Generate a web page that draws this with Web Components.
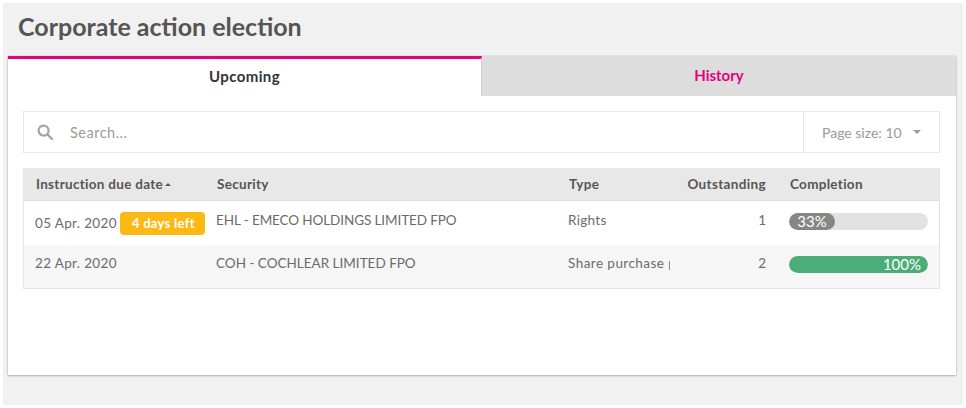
<!DOCTYPE html>
<html>
<head>
<meta charset="utf-8">
<title>Corporate action election</title>
<style>
    html, body { margin: 0; background: #fff; }
    body { padding: 3px; width: 960px; height: 402px; font-family: Lato, "Open Sans", sans-serif; color: #555; }
</style>
</head>
<body>
<election-page heading="Corporate action election">
    <election-tabs active="Upcoming" other="History"></election-tabs>
    <search-bar placeholder="Search..." page-size="10"></search-bar>
    <election-table>
        <table-head></table-head>
        <table-row date="05 Apr. 2020" badge="4 days left" security="EHL - EMECO HOLDINGS LIMITED FPO" type="Rights" outstanding="1" percent="33"></table-row>
        <table-row alt date="22 Apr. 2020" security="COH - COCHLEAR LIMITED FPO" type="Share purchase plan" outstanding="2" percent="100"></table-row>
    </election-table>
</election-page>

<script>
const COLUMNS = '181px 352px 102px 95px 1fr';

class ElectionPage extends HTMLElement {
    constructor() {
        super();
        this.attachShadow({ mode: 'open' });
        this.shadowRoot.innerHTML = `
            <style>
                :host { display: block; height: 402px; background: #f1f1f1; box-sizing: border-box; padding: 0 7px 0 5px; }
                h1 { margin: 0; height: 53px; padding: 8px 0 0 10px; box-sizing: border-box; font-size: 25px; line-height: 30px; font-weight: 700; color: #555; }
                .card { height: 319px; box-sizing: border-box; background: #fff; box-shadow: 0 1px 2px rgba(0,0,0,.25), 0 0 2px rgba(0,0,0,.12); }
                .body { padding: 15px 16px 0 15px; }
            </style>
            <h1></h1>
            <div class="card">
                <slot name="tabs"></slot>
                <div class="body"><slot></slot></div>
            </div>
        `;
        this.shadowRoot.querySelector('h1').textContent = this.getAttribute('heading');
        this.querySelector('election-tabs').slot = 'tabs';
    }
}

class ElectionTabs extends HTMLElement {
    constructor() {
        super();
        this.attachShadow({ mode: 'open' });
        this.shadowRoot.innerHTML = `
            <style>
                :host { display: flex; height: 40px; font-size: 15px; font-weight: 700; }
                div { display: flex; align-items: center; justify-content: center; box-sizing: border-box; }
                .active { width: 474px; border-top: 3px solid #e6007e; color: #333; padding-bottom: 3px; border-right: 1px solid #ccc; letter-spacing: .4px; }
                .other { flex: 1; background: #dddddd; color: #e6007e; padding-bottom: 2px; }
            </style>
            <div class="active"></div>
            <div class="other"></div>
        `;
        this.shadowRoot.querySelector('.active').textContent = this.getAttribute('active');
        this.shadowRoot.querySelector('.other').textContent = this.getAttribute('other');
    }
}

class SearchBar extends HTMLElement {
    constructor() {
        super();
        this.attachShadow({ mode: 'open' });
        this.shadowRoot.innerHTML = `
            <style>
                :host { display: flex; height: 42px; box-sizing: border-box; border: 1px solid #e8e8e8; margin-bottom: 15px; font-size: 14.5px; color: #9a9a9a; }
                .search { flex: 1; display: flex; align-items: center; padding-left: 13px; gap: 17px; }
                .placeholder { letter-spacing: .5px; }
                svg.glass { width: 16px; height: 16px; }
                .size { width: 136px; box-sizing: border-box; border-left: 1px solid #e8e8e8; display: flex; align-items: center; padding-left: 18px; font-size: 14px; }
                .caret { width: 0; height: 0; margin-left: 11px; border: 4px solid transparent; border-top: 4px solid #999; border-bottom: 0; }
            </style>
            <div class="search">
                <svg class="glass" viewBox="0 0 16 16" fill="none" stroke="#a3a3a3" stroke-width="2.2">
                    <circle cx="6.6" cy="6.6" r="5"/>
                    <path d="M10.4 10.4 L15 15" stroke-linecap="round"/>
                </svg>
                <span class="placeholder"></span>
            </div>
            <div class="size"><span class="label"></span><span class="caret"></span></div>
        `;
        this.shadowRoot.querySelector('.placeholder').textContent = this.getAttribute('placeholder');
        this.shadowRoot.querySelector('.label').textContent = 'Page size: ' + this.getAttribute('page-size');
    }
}

class ElectionTable extends HTMLElement {
    constructor() {
        super();
        this.attachShadow({ mode: 'open' });
        this.shadowRoot.innerHTML = `
            <style>
                :host { display: block; border: 1px solid #e4e4e4; border-top: 0; }
            </style>
            <slot></slot>
        `;
    }
}

class TableHead extends HTMLElement {
    constructor() {
        super();
        this.attachShadow({ mode: 'open' });
        this.shadowRoot.innerHTML = `
            <style>
                :host { display: grid; grid-template-columns: ${COLUMNS}; height: 33px; box-sizing: border-box; align-items: center; background: #e8e8e8; border-bottom: 1px solid #dedede; font-size: 13.5px; font-weight: 700; letter-spacing: .3px; color: #555; padding-left: 12px; }
                .sort { display: inline-block; vertical-align: 3px; margin-left: 2px; border: 3px solid transparent; border-bottom: 3px solid #555; border-top: 0; }
                .num { text-align: right; letter-spacing: .35px; }
                .done { padding-left: 24px; }
            </style>
            <div>Instruction due date<span class="sort"></span></div>
            <div>Security</div>
            <div>Type</div>
            <div class="num">Outstanding</div>
            <div class="done">Completion</div>
        `;
    }
}

class TableRow extends HTMLElement {
    constructor() {
        super();
        this.attachShadow({ mode: 'open' });
        const percent = Number(this.getAttribute('percent'));
        const full = percent === 100;
        this.shadowRoot.innerHTML = `
            <style>
                :host { display: grid; grid-template-columns: ${COLUMNS}; align-items: start; box-sizing: border-box; height: 44px; padding: 11px 0 0 11px; font-size: 13.5px; line-height: 17px; color: #6b6b6b; background: #fff; }
                :host([alt]) { background: #f6f6f6; height: 43px; padding-top: 10px; }
                .date { display: flex; align-items: center; gap: 3px; white-space: nowrap; letter-spacing: .35px; }
                .badge { background: #fdb913; color: #fff; font-weight: 700; font-size: 13px; letter-spacing: .3px; border-radius: 4px; height: 23px; line-height: 23px; padding: 0 10px 0 12px; }
                .security { letter-spacing: -.1px; }
                :host([alt]) .security { letter-spacing: 0; }
                .type { overflow: hidden; white-space: nowrap; letter-spacing: .3px; }
                :host([alt]) .type { letter-spacing: .45px; }
                .num { text-align: right; margin-right: -1px; }
                .done { padding-left: 24px; padding-top: 1px; }
                .track { width: 139px; height: 17px; border-radius: 9px; background: #e2e2e2; overflow: hidden; color: #fff; font-size: 15px; line-height: 17px; }
                .fill { height: 100%; border-radius: 9px; background: ${full ? '#4cad78' : '#868686'}; width: ${percent === 33 ? 46 : 139}px; box-sizing: border-box; text-align: ${full ? 'right' : 'center'}; padding-right: ${full ? 7 : 0}px; }
            </style>
            <div class="date"><span class="date-text"></span></div>
            <div class="security"></div>
            <div class="type"></div>
            <div class="num"></div>
            <div class="done"><div class="track"><div class="fill"></div></div></div>
        `;
        const root = this.shadowRoot;
        root.querySelector('.date-text').textContent = this.getAttribute('date');
        root.querySelector('.security').textContent = this.getAttribute('security');
        root.querySelector('.type').textContent = this.getAttribute('type');
        root.querySelector('.num').textContent = this.getAttribute('outstanding');
        root.querySelector('.fill').textContent = percent + '%';
        if (this.hasAttribute('badge')) {
            const badge = document.createElement('span');
            badge.className = 'badge';
            badge.textContent = this.getAttribute('badge');
            root.querySelector('.date').appendChild(badge);
        }
    }
}

customElements.define('election-page', ElectionPage);
customElements.define('election-tabs', ElectionTabs);
customElements.define('search-bar', SearchBar);
customElements.define('election-table', ElectionTable);
customElements.define('table-head', TableHead);
customElements.define('table-row', TableRow);
</script>
</body>
</html>
